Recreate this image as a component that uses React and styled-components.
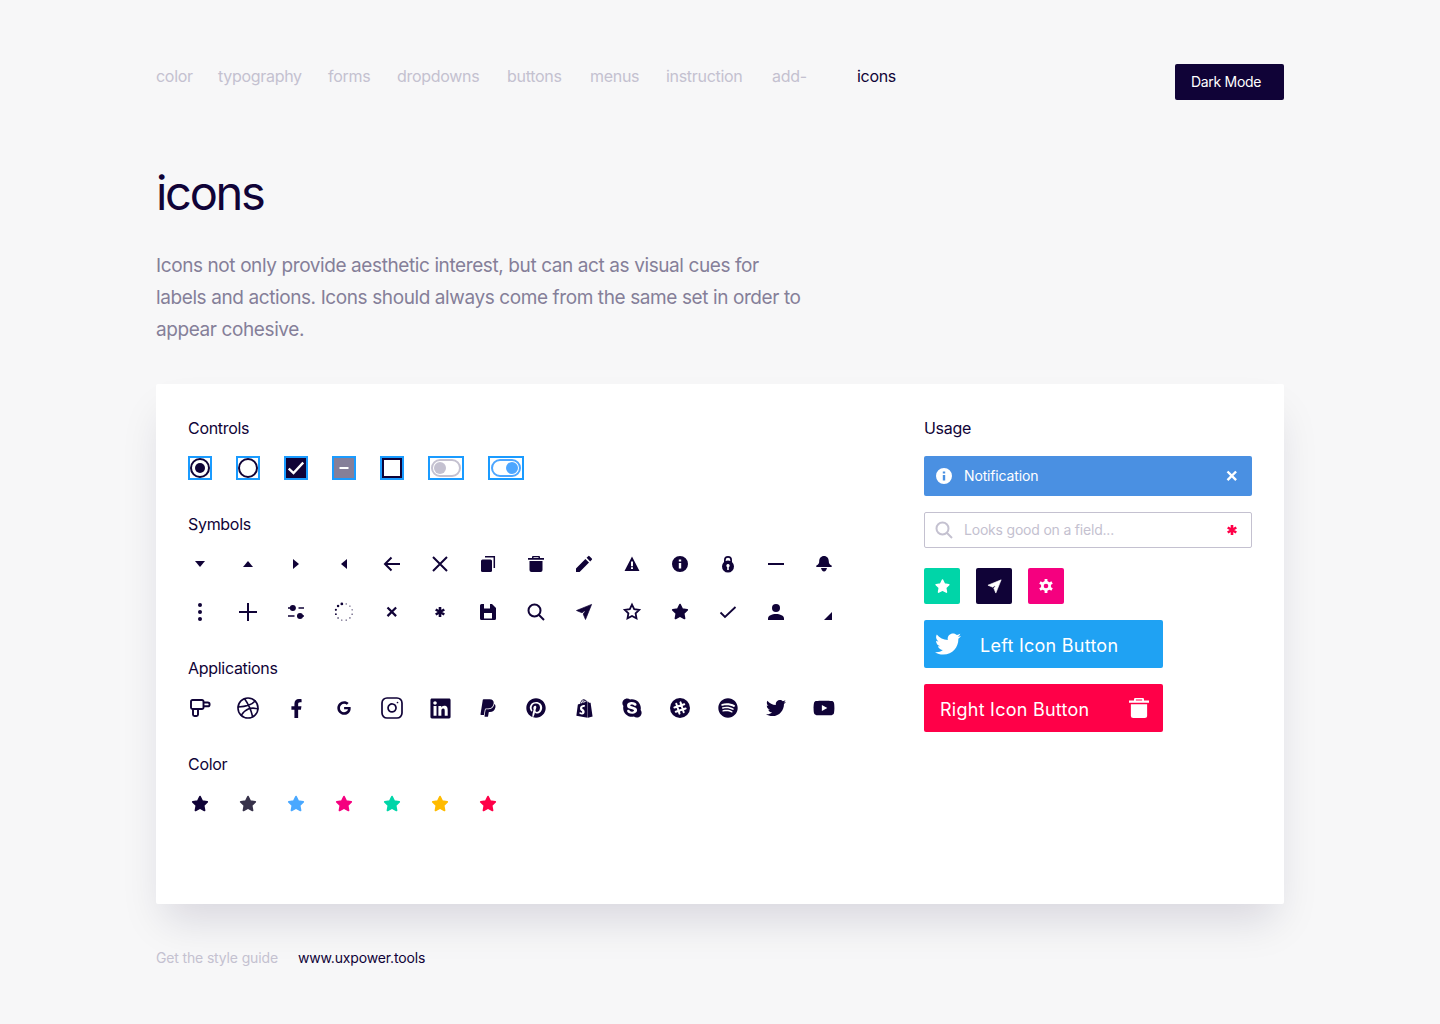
import React from 'react'
import styled, { createGlobalStyle } from 'styled-components'
import {
  FaTwitter, FaFacebookF, FaGoogle, FaLinkedin, FaPaypal, FaPinterest,
  FaShopify, FaSkype, FaSpotify, FaYoutube,
} from 'react-icons/fa'
import { FiDribbble, FiInstagram } from 'react-icons/fi'

const navy = '#100337'
const grey = '#857f99'
const light = '#c4c1d0'
const focus = '#1a9bff'

const GlobalStyle = createGlobalStyle`
  html, body { margin: 0; padding: 0; background: #f7f7f8; }
  body { font-family: Inter, "Liberation Sans", sans-serif; color: ${navy}; }
`

const Page = styled.div`
  width: 1128px;
  min-height: 1024px;
  margin: 0 auto;
  padding-top: 64px;
  box-sizing: border-box;
`
const Header = styled.header`
  display: flex;
  justify-content: space-between;
  align-items: flex-start;
`
const Nav = styled.nav`
  display: grid;
  grid-template-columns: 62px 110px 69px 110px 83px 76px 106px 85px auto;
`
const NavLink = styled.a`
  font-size: 16px;
  line-height: 24px;
  letter-spacing: -0.3px;
  color: ${p => (p.$active ? navy : light)};
`
const DarkButton = styled.button`
  width: 109px;
  height: 36px;
  border: 0;
  border-radius: 2px;
  padding: 0 0 2px 16px;
  background: ${navy};
  color: #fff;
  font: 400 14px Inter, sans-serif;
  letter-spacing: -0.3px;
  text-align: left;
`
const Title = styled.h1`
  margin: 61px 0 25px;
  font-size: 47px;
  line-height: 64px;
  font-weight: 400;
  letter-spacing: -2.3px;
  color: ${navy};
`
const Lead = styled.p`
  margin: 0 0 38px;
  width: 650px;
  font-size: 19px;
  line-height: 32px;
  letter-spacing: -0.4px;
  color: ${grey};
`
const Card = styled.section`
  display: flex;
  height: 520px;
  box-sizing: border-box;
  padding: 32px;
  background: #fff;
  border-radius: 2px;
  box-shadow: 0 24px 40px -8px rgba(16, 3, 55, 0.13);
`
const LeftColumn = styled.div`
  width: 736px;
  display: flex;
  flex-direction: column;
  gap: 32px;
`
const RightColumn = styled.div`
  width: 328px;
`
const Group = styled.div`
  display: flex;
  flex-direction: column;
  gap: 16px;
`
const Label = styled.h2`
  margin: 0;
  font-size: 16px;
  line-height: 24px;
  font-weight: 400;
  letter-spacing: -0.3px;
  color: ${navy};
`
const IconRows = styled.div`
  display: flex;
  flex-direction: column;
  gap: 24px;
`
const IconRow = styled.div`
  display: flex;
  gap: 24px;
`
const IconCell = styled.span`
  width: 24px;
  height: 24px;
  display: flex;
  align-items: center;
  justify-content: center;
  color: ${p => p.$color || navy};
  & svg { display: block; }
`

/* controls */
const Frame = styled.span`
  width: ${p => (p.$wide ? '36px' : '24px')};
  height: 24px;
  box-sizing: border-box;
  border: 2px solid ${focus};
  background: #fff;
  display: flex;
  align-items: center;
  justify-content: center;
`
const Radio = styled.span`
  width: 20px;
  height: 20px;
  box-sizing: border-box;
  border: 2px solid ${navy};
  border-radius: 50%;
  display: flex;
  align-items: center;
  justify-content: center;
  &::after {
    content: '';
    display: ${p => (p.$on ? 'block' : 'none')};
    width: 10px;
    height: 10px;
    border-radius: 50%;
    background: ${navy};
  }
`
const Box = styled.span`
  width: 20px;
  height: 20px;
  box-sizing: border-box;
  border: 2px solid ${p => p.$fill || navy};
  background: ${p => p.$fill || '#fff'};
  display: flex;
  align-items: center;
  justify-content: center;
`
const Toggle = styled.span`
  width: 30px;
  height: 18px;
  box-sizing: border-box;
  border: 2px solid ${p => p.$color};
  border-radius: 9px;
  display: flex;
  align-items: center;
  justify-content: ${p => (p.$on ? 'flex-end' : 'flex-start')};
  padding: 0 1px;
  &::after {
    content: '';
    width: 12px;
    height: 12px;
    border-radius: 50%;
    background: ${p => p.$color};
  }
`

/* usage column */
const Notification = styled.div`
  height: 40px;
  margin-top: 16px;
  display: flex;
  align-items: center;
  padding: 0 8px;
  background: #4a90e2;
  border-radius: 2px;
  color: #fff;
  font-size: 14px;
  letter-spacing: -0.15px;
`
const Grow = styled.span`
  flex: 1;
  margin: 0 0 2px 8px;
`
const Field = styled.div`
  height: 36px;
  margin-top: 16px;
  box-sizing: border-box;
  display: flex;
  align-items: center;
  padding: 0 7px;
  background: #fff;
  border: 1px solid ${light};
  border-radius: 2px;
  color: ${light};
  font-size: 14px;
  letter-spacing: -0.2px;
`
const SquareRow = styled.div`
  display: flex;
  gap: 16px;
  margin-top: 20px;
`
const Square = styled.span`
  width: 36px;
  height: 36px;
  border-radius: 2px;
  background: ${p => p.$bg};
  color: #fff;
  display: flex;
  align-items: center;
  justify-content: center;
`
const BigButton = styled.button`
  width: 239px;
  height: 48px;
  margin-top: 16px;
  display: flex;
  align-items: center;
  justify-content: space-between;
  padding: 0 ${p => p.$right} 0 ${p => p.$leftPad};
  border: 0;
  border-radius: 2px;
  background: ${p => p.$bg};
  color: #fff;
  font: 400 18px Inter, sans-serif;
  letter-spacing: 0.25px;
`
const ButtonText = styled.span`
  flex: 1;
  text-align: left;
  padding-top: 2px;
  margin-left: ${p => p.$left || 0};
`

const Footer = styled.footer`
  margin-top: 44px;
  display: flex;
  gap: 20px;
  font-size: 14px;
  line-height: 20px;
  letter-spacing: -0.15px;
  color: ${light};
`
const FooterLink = styled.a`
  color: ${navy};
`

/* drawn icons */
const Svg = ({ children, size = 24 }) => (
  <svg width={size} height={size} viewBox="0 0 24 24" fill="currentColor">{children}</svg>
)
const Line = ({ d, w = 2 }) => (
  <path d={d} fill="none" stroke="currentColor" strokeWidth={w} />
)
const STAR = 'M12 4.6l2.2 4.6 5 .7-3.6 3.5.9 5-4.5-2.4-4.5 2.4.9-5-3.6-3.5 5-.7z'
const SEND = 'M19.600 4.400L4.500 10.500l5.500 2.300 2.400-1.800.6.600-1.800 2.400 2.300 5.500z'
const StarFilled = ({ size }) => (
  <Svg size={size}><path d={STAR} stroke="currentColor" strokeWidth="1.8" strokeLinejoin="round" /></Svg>
)
const Send = ({ size }) => (
  <Svg size={size}><path d={SEND} stroke="currentColor" strokeWidth=".7" strokeLinejoin="round" /></Svg>
)
const Trash = ({ size }) => (
  <Svg size={size}>
    <path d="M9 4h6a1 1 0 0 1 1 1v1h4v1.700H4V6h4V5a1 1 0 0 1 1-1zm.5 1.200V6h5v-.8z" />
    <path d="M5.500 9h13v9a2 2 0 0 1-2 2h-9a2 2 0 0 1-2-2z" />
  </Svg>
)
const Asterisk = ({ size }) => (
  <Svg size={size}>
    <Line d="M12 7v10M7.700 9.500l8.600 5M16.300 9.500l-8.600 5" w={2.600} />
  </Svg>
)
const SmallX = ({ size, w = 2 }) => <Svg size={size}><Line d="M7.500 7.500l8.600 8.600M16.100 7.500l-8.600 8.600" w={w} /></Svg>
const Info = ({ size }) => (
  <Svg size={size}>
    <path fillRule="evenodd" d="M12 4a8 8 0 1 1 0 16 8 8 0 0 1 0-16zm-1.200 3.600v2h2.400v-2zm0 3.400v5.400h2.400V11z" />
  </Svg>
)
const Search = ({ size }) => (
  <Svg size={size}>
    <circle cx="10.500" cy="10.500" r="6" fill="none" stroke="currentColor" strokeWidth="2" />
    <Line d="M15 15l5 5" />
  </Svg>
)
const Gear = ({ hole }) => (
  <Svg>
    <Line d="M12 5v14M5.940 8.500l12.120 7M18.060 8.500l-12.120 7" w={2.800} />
    <circle cx="12" cy="12" r="5" />
    <circle cx="12" cy="12" r="2.300" fill={hole} />
  </Svg>
)

const spinnerDots = [...Array(12)].map((_, i) => {
  const a = (i / 12) * Math.PI * 2 - Math.PI / 2.4
  return { x: 12 + 8.4 * Math.cos(a), y: 12 + 8.4 * Math.sin(a), r: i < 6 ? 0.55 + i * 0.02 : 0.6 + (i - 6) * 0.16 }
})

const symbolsTop = [
  <Svg><path d="M7 9h10l-5 6z" /></Svg>,
  <Svg><path d="M7 15h10l-5-6z" /></Svg>,
  <Svg><path d="M9 7v10l6-5z" /></Svg>,
  <Svg><path d="M15 7v10l-6-5z" /></Svg>,
  <Svg><Line d="M20 12H5.500M11.500 5.500L5 12l6.500 6.500" /></Svg>,
  <Svg><Line d="M5 5l14 14M19 5L5 19" /></Svg>,
  <Svg>
    <rect x="5" y="7.500" width="11" height="12.500" rx="1.500" />
    <Line d="M9 4.700h9.300V16" w={1.500} />
  </Svg>,
  <Trash />,
  <Svg><path d="M4 20v-3.600l9.400-9.400 3.600 3.600L7.600 20zM14.600 5.800l1.600-1.600a.9.9 0 0 1 1.300 0l2.300 2.300a.9.9 0 0 1 0 1.300l-1.600 1.600z" /></Svg>,
  <Svg>
    <path fillRule="evenodd" d="M12 4.500l7.500 14.500h-15zm-1 5v4.800h2V9.500zm0 5.700v1.800h2v-1.800z" />
  </Svg>,
  <Info />,
  <Svg>
    <path fillRule="evenodd" d="M12 4a4 4 0 0 1 4 4v2a6 6 0 1 1-8 0V8a4 4 0 0 1 4-4zm0 1.700A2.300 2.300 0 0 0 9.700 8v1a6 6 0 0 1 4.600 0V8A2.300 2.300 0 0 0 12 5.700zM12 12a1.700 1.700 0 0 0-.8 3.200V18h1.600v-2.800A1.700 1.700 0 0 0 12 12z" />
  </Svg>,
  <Svg><Line d="M4 12h16" /></Svg>,
  <Svg>
    <path d="M12 4c3 0 4.800 2.300 4.800 5.200 0 2 .8 3.300 2.700 4.300.8.500.4 1.500-.5 1.500H5c-.9 0-1.300-1-.5-1.500 1.900-1 2.700-2.300 2.700-4.300C7.200 6.300 9 4 12 4z" />
    <path d="M9 16h6c-.4 1.900-1.500 3.500-3 3.500S9.400 17.900 9 16z" />
  </Svg>,
]

const symbolsBottom = [
  <Svg><circle cx="12" cy="5" r="2" /><circle cx="12" cy="12" r="2" /><circle cx="12" cy="19" r="2" /></Svg>,
  <Svg><Line d="M12 3v18M3 12h18" /></Svg>,
  <Svg>
    <Line d="M4 8h16M4 16h16" w={1.600} />
    <path fill="#fff" d="M11.500 6h3v4h-3zM10.500 14h3v4h-3z" />
    <circle cx="8.800" cy="8" r="3" />
    <circle cx="16" cy="16" r="3" />
  </Svg>,
  <Svg>{spinnerDots.map((d, i) => <circle key={i} cx={d.x} cy={d.y} r={d.r} />)}</Svg>,
  <SmallX w={2.200} />,
  <Asterisk />,
  <Svg>
    <path fillRule="evenodd" d="M5.500 4H16l4 4v10.500a1.500 1.500 0 0 1-1.500 1.500h-13A1.500 1.500 0 0 1 4 18.500v-13A1.500 1.500 0 0 1 5.500 4zM8 4v4.500h6V4zm0 9v5.500h8V13z" />
  </Svg>,
  <Search />,
  <Send />,
  <Svg><path d={STAR} fill="none" stroke="currentColor" strokeWidth="1.800" strokeLinejoin="miter" /></Svg>,
  <StarFilled />,
  <Svg><Line d="M4.500 12.500l4.500 4.500L19.500 7" w={1.800} /></Svg>,
  <Svg>
    <circle cx="12" cy="8" r="4" />
    <path d="M4 20v-1.500C4 15.500 8 14 12 14s8 1.500 8 4.500V20z" />
  </Svg>,
  <Svg><path d="M20 12v8h-8z" /></Svg>,
]

const Pistol = () => (
  <Svg>
    <g fill="none" stroke="currentColor" strokeWidth="1.900">
      <path d="M4.500 4h9.500a1.500 1.500 0 0 1 1.500 1.500v6a1.500 1.500 0 0 1-1.500 1.500H4.500A1.500 1.500 0 0 1 3 11.500v-6A1.500 1.500 0 0 1 4.500 4z" />
      <path d="M15.500 6.500h4.200a1.900 1.900 0 0 1 0 3.800h-4.200" />
      <path d="M5 13v5.500A1.500 1.500 0 0 0 6.500 20h2a1.500 1.500 0 0 0 1.500-1.500V13" />
    </g>
  </Svg>
)
const SlackCircle = () => (
  <Svg>
    <circle cx="12" cy="12" r="10" />
    <path d="M9.800 6.800v10.400M14.200 6.800v10.400M6.800 9.800h10.400M6.800 14.200h10.400" fill="none" stroke="#fff" strokeWidth="2" strokeLinecap="round" transform="rotate(-18 12 12)" />
  </Svg>
)

const applications = [
  <Pistol />,
  <FiDribbble size={24} strokeWidth={1.6} />,
  <FaFacebookF size={19} />,
  <FaGoogle size={14} />,
  <FiInstagram size={24} strokeWidth={1.700} />,
  <FaLinkedin size={23} />,
  <FaPaypal size={20} />,
  <FaPinterest size={20} />,
  <FaShopify size={19} />,
  <FaSkype size={22} />,
  <SlackCircle />,
  <FaSpotify size={20} />,
  <FaTwitter size={20} />,
  <FaYoutube size={22} />,
]

const starColors = [navy, '#37324a', '#4aa8ff', '#f5007f', '#00d5a8', '#ffbb00', '#ff0048']
const navItems = ['color', 'typography', 'forms', 'dropdowns', 'buttons', 'menus', 'instruction', 'add-']

const Cells = ({ items }) => (
  <IconRow>
    {items.map((icon, i) => <IconCell key={i}>{icon}</IconCell>)}
  </IconRow>
)

export default function App() {
  return (
    <Page>
      <GlobalStyle />
      <Header>
        <Nav>
          {navItems.map(item => <NavLink key={item}>{item}</NavLink>)}
          <NavLink $active>icons</NavLink>
        </Nav>
        <DarkButton>Dark Mode</DarkButton>
      </Header>

      <Title>icons</Title>
      <Lead>
        Icons not only provide aesthetic interest, but can act as visual cues for
        labels and actions. Icons should always come from the same set in order to
        appear cohesive.
      </Lead>

      <Card>
        <LeftColumn>
          <Group>
            <Label>Controls</Label>
            <IconRow>
              <Frame><Radio $on /></Frame>
              <Frame><Radio /></Frame>
              <Frame>
                <Box $fill={navy}>
                  <svg width="16" height="16" viewBox="0 0 16 16"><path d="M.8 8.500L5.500 13l9.700-10.500" fill="none" stroke="#fff" strokeWidth="2.400" /></svg>
                </Box>
              </Frame>
              <Frame>
                <Box $fill={grey}>
                  <svg width="16" height="16" viewBox="0 0 16 16"><path d="M3.500 8h9" fill="none" stroke="#fff" strokeWidth="2" /></svg>
                </Box>
              </Frame>
              <Frame><Box /></Frame>
              <Frame $wide><Toggle $color={light} /></Frame>
              <Frame $wide><Toggle $on $color="#4da6ff" /></Frame>
            </IconRow>
          </Group>
          <Group>
            <Label>Symbols</Label>
            <IconRows>
              <Cells items={symbolsTop} />
              <Cells items={symbolsBottom} />
            </IconRows>
          </Group>
          <Group>
            <Label>Applications</Label>
            <Cells items={applications} />
          </Group>
          <Group>
            <Label>Color</Label>
            <IconRow>
              {starColors.map(color => (
                <IconCell key={color} $color={color}><StarFilled /></IconCell>
              ))}
            </IconRow>
          </Group>
        </LeftColumn>

        <RightColumn>
          <Label>Usage</Label>
          <Notification>
            <Info />
            <Grow>Notification</Grow>
            <SmallX w={2.400} />
          </Notification>
          <Field>
            <Search />
            <Grow>Looks good on a field...</Grow>
            <IconCell $color="#ff0048"><Asterisk /></IconCell>
          </Field>
          <SquareRow>
            <Square $bg="#00d5a8"><StarFilled size={21} /></Square>
            <Square $bg={navy}><Send size={21} /></Square>
            <Square $bg="#f5007f"><Gear hole="#f5007f" /></Square>
          </SquareRow>
          <BigButton $bg="#1fa2f3" $leftPad="11px" $right="12px">
            <FaTwitter size={26} />
            <ButtonText $left="19px">Left Icon Button</ButtonText>
          </BigButton>
          <BigButton $bg="#ff0048" $leftPad="16px" $right="9px">
            <ButtonText>Right Icon Button</ButtonText>
            <Trash size={30} />
          </BigButton>
        </RightColumn>
      </Card>

      <Footer>
        <span>Get the style guide</span>
        <FooterLink>www.uxpower.tools</FooterLink>
      </Footer>
    </Page>
  )
}
